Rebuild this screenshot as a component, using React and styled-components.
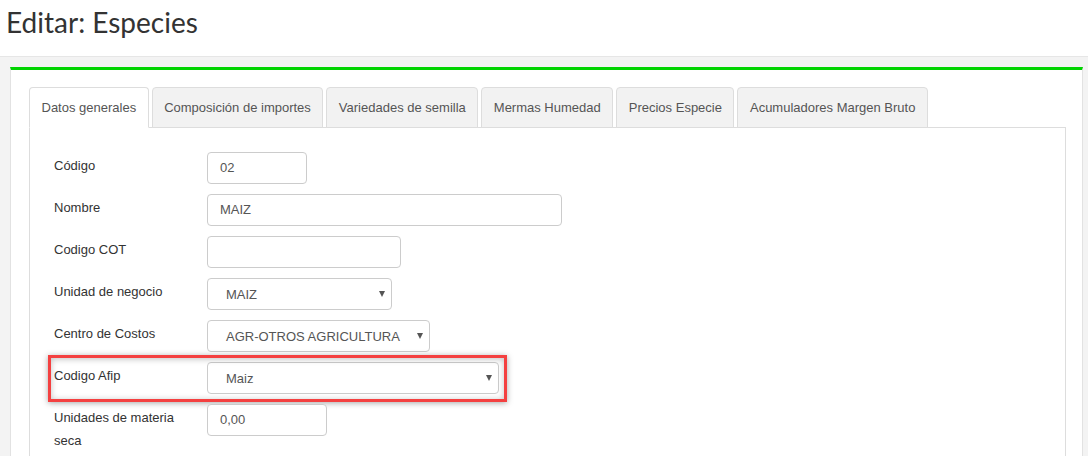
import React from "react";
import styled, { createGlobalStyle } from "styled-components";

const GlobalStyle = createGlobalStyle`
  html, body {
    margin: 0;
    padding: 0;
    overflow: hidden;
    background: #ffffff;
    font-family: "Liberation Sans", Arial, sans-serif;
  }
  * {
    box-sizing: border-box;
  }
`;

// Page header
const PageHeader = styled.header`
  height: 57px;
  padding: 4px 0 0 6px;
  border-bottom: 1px solid #e6e6e6;
  background: #ffffff;
`;

const Title = styled.h1`
  margin: 0;
  font-family: Lato, "Open Sans", sans-serif;
  font-weight: 400;
  font-size: 28px;
  line-height: 36px;
  color: #333333;
`;

// Main area
const Main = styled.main`
  background: #f3f3f3;
  padding: 10px 5px 0 10px;
  min-height: 400px;
`;

const Card = styled.section`
  background: #ffffff;
  border-top: 3px solid #00d400;
  border-left: 1px solid #e2e2e2;
  border-right: 1px solid #e2e2e2;
  padding: 17px 16px 30px 18px;
`;

// Tabs
const TabList = styled.ul`
  display: flex;
  margin: 0;
  padding: 0;
  list-style: none;
  border-bottom: 1px solid #dddddd;
`;

const Tab = styled.li`
  margin: 0 3px -1px 0;
  padding: 10px 11.5px;
  font-size: 13px;
  line-height: 19px;
  color: #555555;
  border: 1px solid #dddddd;
  border-radius: 4px 4px 0 0;
  background: ${(p) => (p.$active ? "#ffffff" : "#f2f2f2")};
  border-bottom-color: ${(p) => (p.$active ? "transparent" : "#dddddd")};
  white-space: nowrap;
  cursor: pointer;
`;

const TabPanel = styled.div`
  border: 1px solid #dddddd;
  border-top: none;
  padding: 24px 24px 20px 24px;
`;

// Form
const FormRow = styled.div`
  position: relative;
  display: grid;
  grid-template-columns: 153px auto;
  align-items: start;
  margin-bottom: 10px;
  width: ${(p) => (p.$highlight ? "fit-content" : "auto")};

  ${(p) =>
    p.$highlight &&
    `
    &::after {
      content: "";
      position: absolute;
      top: -7px;
      right: -8px;
      bottom: -8px;
      left: -6px;
      border: 3px solid #f44040;
      box-shadow: 0 1px 6px rgba(0, 0, 0, 0.35), inset 0 1px 6px rgba(0, 0, 0, 0.25);
      pointer-events: none;
    }
  `}
`;

const Label = styled.label`
  padding: 2px 24px 0 0;
  font-size: 13px;
  line-height: 23px;
  color: #333333;
`;

const TextInput = styled.div`
  width: ${(p) => p.$width}px;
  height: 32px;
  padding: 0 12px;
  border: 1px solid #cccccc;
  border-radius: 4px;
  font-size: 13px;
  line-height: 30px;
  color: #555555;
  background: #ffffff;
`;

const SelectBox = styled.div`
  display: flex;
  align-items: center;
  justify-content: space-between;
  width: ${(p) => p.$width}px;
  height: 32px;
  padding: 0 6px 0 18px;
  border: 1px solid #cccccc;
  border-radius: 4px;
  font-size: 13px;
  color: #555555;
  background: #ffffff;
`;

const Caret = styled.span`
  width: 0;
  height: 0;
  border-left: 3.5px solid transparent;
  border-right: 3.5px solid transparent;
  border-top: 6px solid #555555;
`;

const tabs = [
  "Datos generales",
  "Composición de importes",
  "Variedades de semilla",
  "Mermas Humedad",
  "Precios Especie",
  "Acumuladores Margen Bruto",
];

const fields = [
  { label: "Código", type: "input", value: "02", width: 100 },
  { label: "Nombre", type: "input", value: "MAIZ", width: 355 },
  { label: "Codigo COT", type: "input", value: "", width: 194 },
  { label: "Unidad de negocio", type: "select", value: "MAIZ", width: 185 },
  { label: "Centro de Costos", type: "select", value: "AGR-OTROS AGRICULTURA", width: 223 },
  { label: "Codigo Afip", type: "select", value: "Maiz", width: 292, highlight: true },
  { label: "Unidades de materia seca", type: "input", value: "0,00", width: 120 },
];

const App = () => {
  return (
    <>
      <GlobalStyle />
      <PageHeader>
        <Title>Editar: Especies</Title>
      </PageHeader>

      <Main>
        <Card>
          <TabList>
            {tabs.map((t, i) => (
              <Tab key={t} $active={i === 0}>
                {t}
              </Tab>
            ))}
          </TabList>

          <TabPanel>
            {fields.map((f) => (
              <FormRow key={f.label} $highlight={f.highlight}>
                <Label>{f.label}</Label>
                {f.type === "select" ? (
                  <SelectBox $width={f.width}>
                    <span>{f.value}</span>
                    <Caret />
                  </SelectBox>
                ) : (
                  <TextInput $width={f.width}>{f.value}</TextInput>
                )}
              </FormRow>
            ))}
          </TabPanel>
        </Card>
      </Main>
    </>
  );
};

export default App;
